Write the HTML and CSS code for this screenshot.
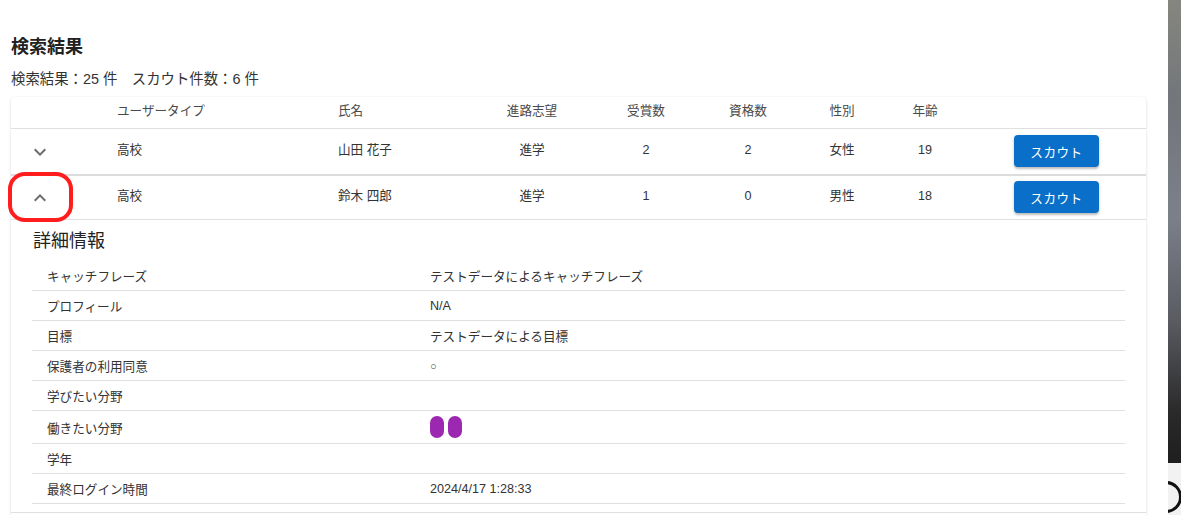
FILE: index.html
```html
<html>

<head>
  <link rel="stylesheet" href="styles.css">
</head>

<body>
  <div class="page">
    <h2 class="title">検索結果</h2>
    <p class="summary">検索結果：25 件　スカウト件数：6 件</p>

    <div class="paper">
      <div class="row head">
        <div class="cell"></div>
        <div class="cell left">ユーザータイプ</div>
        <div class="cell left">氏名</div>
        <div class="cell">進路志望</div>
        <div class="cell">受賞数</div>
        <div class="cell">資格数</div>
        <div class="cell">性別</div>
        <div class="cell">年齢</div>
        <div class="cell"></div>
      </div>

      <div class="row body first">
        <div class="cell toggle">
          <svg class="chev" viewBox="0 0 24 24"><path d="M7.41 8.59 12 13.17l4.59-4.58L18 10l-6 6-6-6 1.41-1.41z" /></svg>
        </div>
        <div class="cell left">高校</div>
        <div class="cell left">山田 花子</div>
        <div class="cell">進学</div>
        <div class="cell">2</div>
        <div class="cell">2</div>
        <div class="cell">女性</div>
        <div class="cell">19</div>
        <div class="cell action"><button class="scout">スカウト</button></div>
      </div>

      <div class="row body open">
        <div class="cell toggle">
          <svg class="chev" viewBox="0 0 24 24"><path d="M7.41 15.41 12 10.83l4.59 4.58L18 14l-6-6-6 6z" /></svg>
        </div>
        <div class="cell left">高校</div>
        <div class="cell left">鈴木 四郎</div>
        <div class="cell">進学</div>
        <div class="cell">1</div>
        <div class="cell">0</div>
        <div class="cell">男性</div>
        <div class="cell">18</div>
        <div class="cell action"><button class="scout">スカウト</button></div>
        <span class="mark"></span>
      </div>

      <div class="detail">
        <h3 class="detail-title">詳細情報</h3>
        <div class="info">
          <div class="info-row"><span class="label">キャッチフレーズ</span><span class="value">テストデータによるキャッチフレーズ</span></div>
          <div class="info-row"><span class="label">プロフィール</span><span class="value">N/A</span></div>
          <div class="info-row"><span class="label">目標</span><span class="value">テストデータによる目標</span></div>
          <div class="info-row"><span class="label">保護者の利用同意</span><span class="value"><span class="maru">○</span></span></div>
          <div class="info-row"><span class="label">学びたい分野</span><span class="value"></span></div>
          <div class="info-row tall"><span class="label">働きたい分野</span><span class="value"><span class="chip"></span><span class="chip"></span></span></div>
          <div class="info-row"><span class="label">学年</span><span class="value"></span></div>
          <div class="info-row"><span class="label">最終ログイン時間</span><span class="value">2024/4/17 1:28:33</span></div>
        </div>
      </div>

      <div class="paper-rest"></div>
    </div>
  </div>

  <div class="strip">
    <span class="dock"></span>
  </div>
</body>

</html>
```

FILE: styles.css
```css
html,
body {
  height: 100%;
  margin: 0;
  overflow: hidden;
}

body {
  display: flex;
  background: #ffffff;
  color: #333333;
  font-family: "Liberation Sans", "Noto Sans CJK JP", sans-serif;
}

.page {
  flex: 1;
  padding: 36px 0 0 11px;
}

.title {
  margin: 0;
  font-size: 18px;
  line-height: 22px;
  font-weight: bold;
  color: #222222;
}

.summary {
  margin: 11px 0 8px;
  font-size: 14.4px;
  line-height: 20px;
  color: #333333;
}

.paper {
  width: 1135px;
  background: #ffffff;
  border-radius: 4px;
  box-shadow: 0 1px 3px rgba(0, 0, 0, 0.14), 0 0 1px rgba(0, 0, 0, 0.08);
}

.row {
  display: grid;
  grid-template-columns: 90px 221px 155px 110px 118px 86px 102px 64px 189px;
  align-items: center;
  font-size: 12.6px;
  line-height: 18px;
  position: relative;
}

.row.head {
  height: 31px;
  color: #4a4a4a;
  border-bottom: 1px solid #e0e0e0;
}

.row.head .cell {
  padding-bottom: 4px;
}

.row.body {
  height: 45px;
  border-bottom: 1px solid #e0e0e0;
}

.row.body .cell {
  padding-bottom: 3px;
}

.row.first {
  border-bottom: 2px solid #dcdcdc;
}

.row.open {
  height: 43px;
}

.cell {
  text-align: center;
}

.cell.left {
  text-align: left;
  padding-left: 16px;
}

.row.body .toggle {
  text-align: left;
  padding: 0 0 0 17px;
  height: 24px;
}

.chev {
  width: 24px;
  height: 24px;
  fill: #6b6b6b;
}

.row.body .action {
  text-align: left;
  padding: 0 0 1px 57px;
  height: 32px;
}

.scout {
  width: 85px;
  height: 32px;
  border: none;
  border-radius: 4px;
  background: #0a6fc8;
  color: #ffffff;
  font-family: "Liberation Sans", "Noto Sans CJK JP", sans-serif;
  font-size: 12.6px;
  letter-spacing: 0.5px;
  box-shadow: 0 2px 2px rgba(0, 0, 0, 0.2), 0 1px 4px rgba(0, 0, 0, 0.1);
  cursor: pointer;
}

.mark {
  position: absolute;
  left: -3px;
  top: -4px;
  width: 65px;
  height: 50px;
  box-sizing: border-box;
  border: 4px solid #ff1d1d;
  border-radius: 17px;
}

.detail {
  padding: 9px 21px 8px;
  border-bottom: 1px solid #e0e0e0;
}

.detail-title {
  margin: 0 0 8px 1px;
  font-size: 18px;
  line-height: 24px;
  font-weight: normal;
  color: #222222;
}

.info-row {
  display: grid;
  grid-template-columns: 383px 1fr;
  align-items: center;
  height: 29px;
  border-bottom: 1px solid #e0e0e0;
  font-size: 12.6px;
}

.info-row.tall {
  height: 32px;
}

.label,
.value {
  padding-left: 15px;
  display: flex;
  align-items: center;
  gap: 4px;
}

.maru {
  font-size: 11px;
  color: #444444;
}

.chip {
  width: 14px;
  height: 22px;
  border-radius: 7px;
  background: #9c27b0;
}

.paper-rest {
  height: 40px;
}

.strip {
  width: 13px;
  flex: none;
  position: relative;
  overflow: hidden;
  background: linear-gradient(#85867f 0%, #72757a 20%, #7c8089 42%, #5a5c62 62%, #2a2a2b 80%, #1e1e1e 90%);
}

.dock {
  position: absolute;
  left: 0;
  top: 463px;
  width: 13px;
  height: 52px;
  background: #f2f2f2;
}

.dock::after {
  content: "";
  position: absolute;
  left: -18px;
  top: 18px;
  width: 26px;
  height: 26px;
  border: 3px solid #111111;
  border-radius: 50%;
}
```
